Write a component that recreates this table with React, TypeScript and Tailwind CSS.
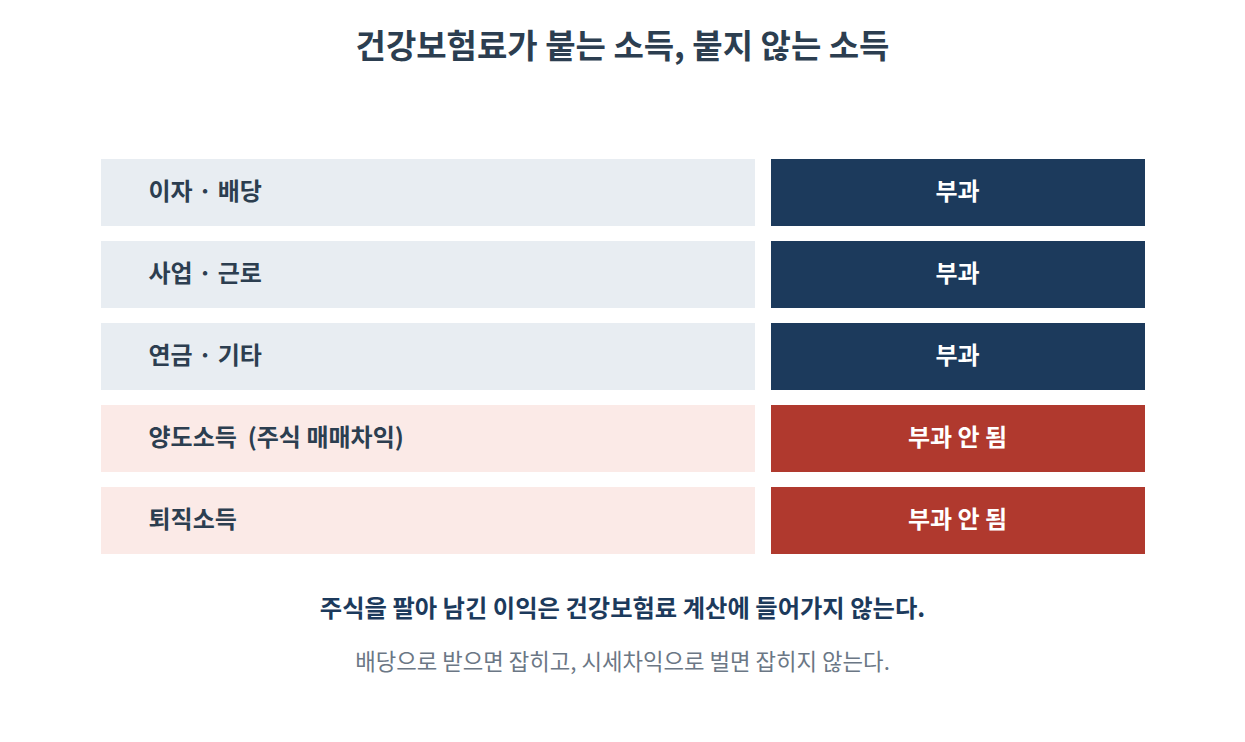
type Row = {
  label: string;
  result: string;
  excluded?: boolean;
};

const rows: Row[] = [
  { label: "이자 · 배당", result: "부과" },
  { label: "사업 · 근로", result: "부과" },
  { label: "연금 · 기타", result: "부과" },
  { label: "양도소득  (주식 매매차익)", result: "부과 안 됨", excluded: true },
  { label: "퇴직소득", result: "부과 안 됨", excluded: true },
];

export default function App() {
  return (
    <div
      className="min-h-[742px] w-full bg-white"
      style={{ fontFamily: '"Noto Sans CJK KR", "Noto Sans", sans-serif' }}
    >
      <h1 className="pt-[22px] text-center text-[33px] font-bold leading-[44px] text-[#2c3e50]">
        건강보험료가 붙는 소득, 붙지 않는 소득
      </h1>

      <div className="mx-auto mt-[93px] flex w-[1044px] flex-col gap-[15px]">
        {rows.map((row) => (
          <div key={row.label} className="flex h-[67px] gap-4">
            <div
              className={`flex w-[654px] items-center whitespace-pre pb-[6px] pl-12 text-[24px] font-bold text-[#2c3e50] ${
                row.excluded ? "bg-[#fbeae7]" : "bg-[#e8edf2]"
              }`}
            >
              {row.label}
            </div>
            <div
              className={`flex flex-1 items-center justify-center pb-[6px] text-[24px] font-bold text-white ${
                row.excluded ? "bg-[#b0392e]" : "bg-[#1c3a5c]"
              }`}
            >
              {row.result}
            </div>
          </div>
        ))}
      </div>

      <p className="mt-[36px] text-center text-[24.3px] font-bold leading-[34px] text-[#1c3a5c]">
        주식을 팔아 남긴 이익은 건강보험료 계산에 들어가지 않는다.
      </p>
      <p className="mt-[20px] text-center text-[22.3px] leading-[32px] text-[#6b7785]">
        배당으로 받으면 잡히고, 시세차익으로 벌면 잡히지 않는다.
      </p>
    </div>
  );
}
